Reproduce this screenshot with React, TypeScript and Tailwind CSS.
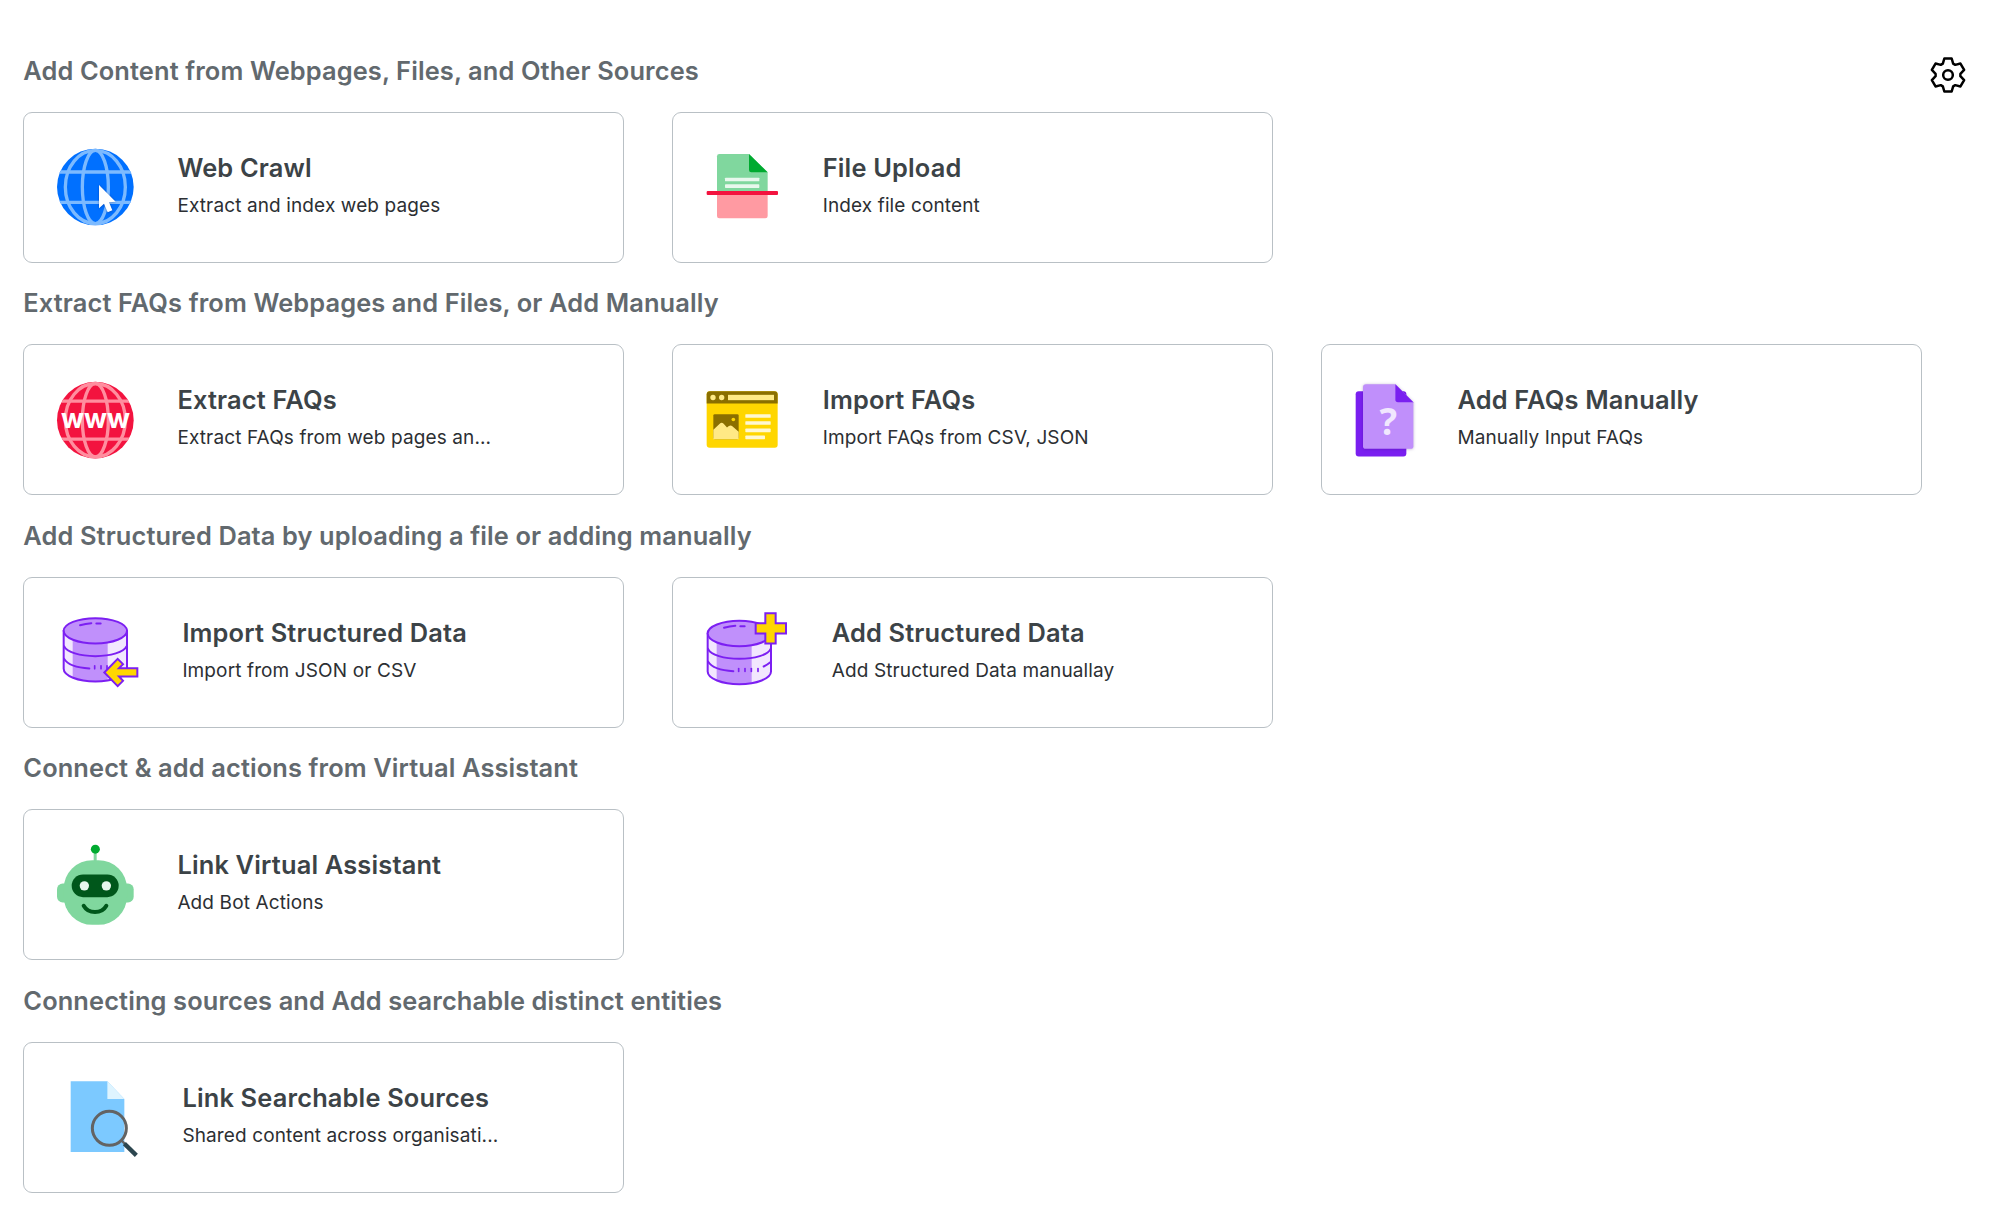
import React from "react";

/* Every icon is drawn in third-of-a-pixel units, 270 units (90px) tall. */

function GlobeLines({ color, cy, ys }: { color: string; cy: number; ys: number[] }) {
  return (
    <g fill="none" stroke={color} strokeWidth="10">
      <ellipse cx="254" cy={cy} rx="90" ry="110" />
      <ellipse cx="254" cy={cy} rx="39" ry="110" />
      {ys.map((y) => (
        <path key={y} d={`M139 ${y}H369`} />
      ))}
    </g>
  );
}

function CrawlIcon() {
  return (
    <svg className="h-[90px] w-[76.7px] shrink-0 overflow-visible" viewBox="139 305 230 270">
      <clipPath id="globe-blue">
        <circle cx="254" cy="440" r="115" />
      </clipPath>
      <circle cx="254" cy="440" r="115" fill="#0070ff" />
      <g clipPath="url(#globe-blue)">
        <GlobeLines color="#7cbaff" cy={440} ys={[395, 486]} />
      </g>
      <path
        d="M265 434V504L280 490L291 516L305 510L295 486L315 484Z"
        fill="#fff"
        className="drop-shadow-[0_1px_3px_rgba(0,0,60,0.35)]"
      />
    </svg>
  );
}

function WwwIcon() {
  return (
    <svg className="h-[90px] w-[76.7px] shrink-0 overflow-visible" viewBox="139 132.5 230 270">
      <clipPath id="globe-red">
        <circle cx="254" cy="268" r="115" />
      </clipPath>
      <circle cx="254" cy="268" r="115" fill="#f3133f" />
      <g clipPath="url(#globe-red)">
        <GlobeLines color="#ff8e9f" cy={268} ys={[211, 325]} />
      </g>
      <text
        x="151"
        y="291"
        textLength="207"
        lengthAdjust="spacingAndGlyphs"
        fontFamily="Inter, sans-serif"
        fontWeight="700"
        fontSize="82"
        fill="#fff"
      >
        www
      </text>
    </svg>
  );
}

function UploadIcon() {
  return (
    <svg className="h-[90px] w-[73px] shrink-0 overflow-visible" viewBox="135 126 219 270">
      <path d="M168 278V169Q168 162 175 162H264L320 217V278Z" fill="#80d79e" />
      <path d="M264 162L320 217H271Q264 217 264 210Z" fill="#00aa30" />
      <rect x="192" y="233" width="103" height="11" rx="2" fill="#e8f8ed" />
      <rect x="192" y="253" width="103" height="11" rx="2" fill="#e8f8ed" />
      <path d="M168 279H320V348Q320 355 313 355H175Q168 355 168 348Z" fill="#ff9aa2" />
      <rect x="137" y="273" width="214" height="12" rx="3" fill="#f3133f" />
    </svg>
  );
}

function ImportFaqIcon() {
  return (
    <svg className="h-[90px] w-[73px] shrink-0 overflow-visible" viewBox="135 132.5 219 270">
      <rect x="137" y="181" width="213" height="170" rx="9" fill="#ffd600" />
      <path d="M137 218V191Q137 181 147 181H340Q350 181 350 191V218Z" fill="#8a6f00" />
      <circle cx="156" cy="200" r="8" fill="#ffea85" />
      <circle cx="182" cy="200" r="8" fill="#ffea85" />
      <rect x="201" y="192" width="138" height="16" fill="#ffea85" />
      <rect x="157" y="250" width="76" height="75" rx="4" fill="#8a6f00" />
      <circle cx="217" cy="266" r="5.5" fill="#ffd600" />
      <path d="M157 297L177 278Q182 273 188 279L198 290Q207 281 214 286L233 303V325H157Z" fill="#ffe985" />
      <g fill="#fff8d2">
        <rect x="253" y="250" width="76" height="11" rx="2" />
        <rect x="253" y="271" width="76" height="11" rx="2" />
        <rect x="253" y="293" width="76" height="11" rx="2" />
        <rect x="253" y="314" width="59" height="11" rx="2" />
      </g>
    </svg>
  );
}

function ManualFaqIcon() {
  return (
    <svg className="h-[90px] w-[58.7px] shrink-0 overflow-visible" viewBox="133 132.5 176 270">
      <rect x="135" y="181" width="152" height="196" rx="9" fill="#7a1ff0" />
      <path
        d="M166 160H254L308 214V346Q308 354 300 354H165Q157 354 157 346V169Q157 160 166 160Z"
        fill="#c08ffb"
        className="drop-shadow-[0_1px_4px_rgba(40,0,100,0.3)]"
      />
      <path d="M254 160L308 214H262Q254 214 254 206Z" fill="#7a1ff0" />
      <text
        x="233"
        y="312"
        textAnchor="middle"
        fontFamily="'Noto Sans', sans-serif"
        fontWeight="700"
        fontSize="110"
        fill="#f1e7fe"
      >
        ?
      </text>
    </svg>
  );
}

function Cylinder({ dots, tail }: { dots: number[]; tail?: boolean }) {
  return (
    <g fill="none" stroke="#7c1ff2" strokeWidth="6" strokeLinecap="round">
      <path d="M159 210V325C159 346 202 363 254 363S349 346 349 325V210Z" fill="#f2e7fe" stroke="none" />
      <path d="M186 210V351Q236 368 291 360V210Z" fill="#c090fb" stroke="none" />
      <path d="M159 210V325C159 346 202 363 254 363S349 346 349 325V210" />
      <ellipse cx="254" cy="211" rx="95" ry="38" fill="#c090fb" />
      <path d="M160 257C168 275 208 287 254 287S340 275 348 257" />
      <path d="M160 295C170 311 198 322 236 324" />
      {tail && <path d="M327 310Q337 305 347 297" />}
      {dots.map((x) => (
        <path key={x} d={`M${x} 316V325`} strokeWidth="5" />
      ))}
      <path d="M208 194Q225 189 242 188M257 189H270" />
    </g>
  );
}

function ImportDataIcon() {
  return (
    <svg className="h-[90px] w-[81.7px] shrink-0 overflow-visible" viewBox="139 139.5 245 270">
      <Cylinder dots={[252, 271, 289]} />
      <path
        d="M281 336L321 295L337 311L325 323H380V348H325L337 361L321 377Z"
        fill="#ffd600"
        stroke="#7c1ff2"
        strokeWidth="6"
      />
    </svg>
  );
}

function AddDataIcon() {
  return (
    <svg className="h-[90px] w-[82px] shrink-0 overflow-visible" viewBox="135 139.5 246 270">
      <g transform="translate(-19 8)">
        <Cylinder dots={[252, 271, 290, 310]} tail />
      </g>
      <path
        d="M313 158H344V188H375V219H344V249H313V219H284V188H313Z"
        fill="#ffd600"
        stroke="#7c1ff2"
        strokeWidth="6"
      />
    </svg>
  );
}

function RobotIcon() {
  return (
    <svg className="h-[90px] w-[76.7px] shrink-0 overflow-visible" viewBox="139 118.5 230 270">
      <g fill="#80d79e">
        <rect x="249" y="150" width="9" height="36" />
        <rect x="139" y="249" width="60" height="57" rx="17" />
        <rect x="309" y="249" width="60" height="57" rx="17" />
        <rect x="159" y="179" width="190" height="194" rx="86" />
      </g>
      <circle cx="254" cy="146" r="13.5" fill="#00aa30" />
      <rect x="183" y="222" width="141" height="68" rx="34" fill="#00571b" />
      <circle cx="221" cy="256" r="14" fill="#e6f7ec" />
      <circle cx="287" cy="256" r="14" fill="#e6f7ec" />
      <path d="M219 316C233 341 273 341 287 316" fill="none" stroke="#00571b" strokeWidth="12" strokeLinecap="round" />
    </svg>
  );
}

function SearchDocIcon() {
  return (
    <svg className="h-[90px] w-[81.7px] shrink-0 overflow-visible" viewBox="139 126 245 270">
      <path d="M180 154H290L341 207V366H180Z" fill="#7cc9ff" />
      <path d="M290 154L341 207H290Z" fill="#def4ff" />
      <circle cx="296" cy="295" r="51" fill="none" stroke="#636363" strokeWidth="9" />
      <path d="M331 330L345 344" stroke="#636363" strokeWidth="7" />
      <path d="M341 341L377 376" stroke="#2c464f" strokeWidth="13" />
    </svg>
  );
}

/* One tooth of the gear; the outline repeats it six times round the centre. */
const TOOTH: [number, number][] = [
  [-15.5, -34],
  [-11, -49.5],
  [11, -49.5],
  [15.5, -34],
];

const GEAR_POINTS = Array.from({ length: 6 }, (_, i) => {
  const a = (i * Math.PI) / 3;
  return TOOTH.map(
    ([x, y]) => `${(x * Math.cos(a) - y * Math.sin(a)).toFixed(1)},${(x * Math.sin(a) + y * Math.cos(a)).toFixed(1)}`,
  ).join(" ");
}).join(" ");

function GearIcon() {
  return (
    <svg className="size-9" viewBox="-54 -54 108 108" fill="none" stroke="#000" strokeWidth="7.5">
      <polygon points={GEAR_POINTS} strokeLinejoin="round" />
      <circle r="14.5" />
    </svg>
  );
}

type Source = { title: string; text: string; icon: React.ReactNode };

const SECTIONS: { heading: string; sources: Source[] }[] = [
  {
    heading: "Add Content from Webpages, Files, and Other Sources",
    sources: [
      { title: "Web Crawl", text: "Extract and index web pages", icon: <CrawlIcon /> },
      { title: "File Upload", text: "Index file content", icon: <UploadIcon /> },
    ],
  },
  {
    heading: "Extract FAQs from Webpages and Files, or Add Manually",
    sources: [
      { title: "Extract FAQs", text: "Extract FAQs from web pages an...", icon: <WwwIcon /> },
      { title: "Import FAQs", text: "Import FAQs from CSV, JSON", icon: <ImportFaqIcon /> },
      { title: "Add FAQs Manually", text: "Manually Input FAQs", icon: <ManualFaqIcon /> },
    ],
  },
  {
    heading: "Add Structured Data by uploading a file or adding manually",
    sources: [
      { title: "Import Structured Data", text: "Import from JSON or CSV", icon: <ImportDataIcon /> },
      { title: "Add Structured Data", text: "Add Structured Data manuallay", icon: <AddDataIcon /> },
    ],
  },
  {
    heading: "Connect & add actions from Virtual Assistant",
    sources: [{ title: "Link Virtual Assistant", text: "Add Bot Actions", icon: <RobotIcon /> }],
  },
  {
    heading: "Connecting sources and Add searchable distinct entities",
    sources: [
      { title: "Link Searchable Sources", text: "Shared content across organisati...", icon: <SearchDocIcon /> },
    ],
  },
];

function SourceCard({ title, text, icon }: Source) {
  return (
    <article className="flex h-[151px] items-center gap-[44px] rounded-[9px] border border-[#b9c0c5] bg-white pl-[32.4px]">
      {icon}
      <div className="mt-[39px] self-start whitespace-nowrap">
        <h3 className="text-[25.4px] leading-8 font-semibold tracking-[0.17px] text-[#3c4347]">{title}</h3>
        <p className="mt-2 text-[19px] leading-7 tracking-[0.12px] text-[#2c2f33]">{text}</p>
      </div>
    </article>
  );
}

export default function App() {
  return (
    <main className="flex h-[1224px] justify-between bg-white pt-[54.6px] pr-[33px] pl-[23.3px] font-['Inter',sans-serif]">
      <div className="flex flex-col gap-[24.5px]">
        {SECTIONS.map(({ heading, sources }) => (
          <section key={heading}>
            <h2 className="mb-[25px] text-[25.4px] leading-8 font-semibold tracking-[0.12px] text-[#62696e]">
              {heading}
            </h2>
            <div className="grid grid-cols-[601px_601px_601px] gap-12">
              {sources.map((s) => (
                <SourceCard key={s.title} {...s} />
              ))}
            </div>
          </section>
        ))}
      </div>
      <button className="mt-[2.6px] size-9" aria-label="Settings">
        <GearIcon />
      </button>
    </main>
  );
}
